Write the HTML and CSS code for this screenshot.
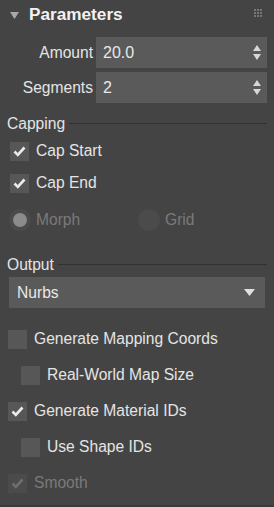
FILE: index.html
```html
<!DOCTYPE html>
<html lang="en">
<head>
  <meta charset="UTF-8">
  <meta name="viewport" content="width=device-width, initial-scale=1.0">
  <title>Parameters</title>
  <link rel="stylesheet" href="styles.css">
</head>
<body>
  <div class="panel">
    <!-- Rollout header -->
    <div class="header">
      <svg class="caret" width="9" height="7" viewBox="0 0 9 7"><path d="M0 0 H9 L4.5 7 Z" fill="#a8a8a8"/></svg>
      <span class="title">Parameters</span>
      <svg class="grip" width="8" height="8" viewBox="0 0 8 8" fill="#767676">
        <rect x="0" y="0" width="2" height="2"/><rect x="3" y="0" width="2" height="2"/><rect x="6" y="0" width="2" height="2"/>
        <rect x="0" y="3" width="2" height="2"/><rect x="3" y="3" width="2" height="2"/><rect x="6" y="3" width="2" height="2"/>
        <rect x="0" y="6" width="2" height="2"/><rect x="3" y="6" width="2" height="2"/><rect x="6" y="6" width="2" height="2"/>
      </svg>
    </div>

    <!-- Spinners -->
    <div class="spinners">
      <div class="spin-row">
        <span class="spin-label">Amount</span>
        <div class="field">
          <span>20.0</span>
          <svg class="arrows" width="8" height="15" viewBox="0 0 8 15" fill="#d8d8d8"><path d="M4 0 L8 6 H0 Z"/><path d="M0 9 H8 L4 15 Z"/></svg>
        </div>
      </div>
      <div class="spin-row">
        <span class="spin-label">Segments</span>
        <div class="field">
          <span>2</span>
          <svg class="arrows" width="8" height="15" viewBox="0 0 8 15" fill="#d8d8d8"><path d="M4 0 L8 6 H0 Z"/><path d="M0 9 H8 L4 15 Z"/></svg>
        </div>
      </div>
    </div>

    <!-- Capping group -->
    <div class="group-title"><span>Capping</span><div class="rule"></div></div>
    <div class="check-row cap">
      <span class="box"><svg class="tick" width="19" height="19" viewBox="0 0 19 19"><path d="M4.5 9.5 L7.8 12.8 L14.5 5.5"/></svg></span>
      <span>Cap Start</span>
    </div>
    <div class="check-row cap">
      <span class="box"><svg class="tick" width="19" height="19" viewBox="0 0 19 19"><path d="M4.5 9.5 L7.8 12.8 L14.5 5.5"/></svg></span>
      <span>Cap End</span>
    </div>
    <div class="radio-row">
      <div class="radio-item">
        <span class="radio on"></span>
        <span>Morph</span>
      </div>
      <div class="radio-item">
        <span class="radio"></span>
        <span>Grid</span>
      </div>
    </div>

    <!-- Output group -->
    <div class="group-title output"><span>Output</span><div class="rule"></div></div>
    <div class="dropdown">
      <span>Nurbs</span>
      <svg width="11" height="7" viewBox="0 0 11 7"><path d="M0 0 H11 L5.5 7 Z" fill="#e0e0e0"/></svg>
    </div>

    <div class="options">
      <div class="check-row">
        <span class="box"></span>
        <span>Generate Mapping Coords</span>
      </div>
      <div class="check-row indent">
        <span class="box"></span>
        <span>Real-World Map Size</span>
      </div>
      <div class="check-row">
        <span class="box"><svg class="tick" width="19" height="19" viewBox="0 0 19 19"><path d="M4.5 9.5 L7.8 12.8 L14.5 5.5"/></svg></span>
        <span>Generate Material IDs</span>
      </div>
      <div class="check-row indent">
        <span class="box"></span>
        <span>Use Shape IDs</span>
      </div>
      <div class="check-row disabled">
        <span class="box"><svg class="tick" width="19" height="19" viewBox="0 0 19 19"><path d="M4.5 9.5 L7.8 12.8 L14.5 5.5"/></svg></span>
        <span>Smooth</span>
      </div>
    </div>
  </div>
</body>
</html>
```

FILE: styles.css
```css
body {
  margin: 0;
  background-color: #3a3a3a;
  font-family: "Liberation Sans", Arial, sans-serif;
  font-size: 15.6px;
  color: #e4e4e4;
}
/* Rollout */
.panel {
  height: 505px;
  background-color: #444444;
  overflow: hidden;
}
.header {
  height: 29px;
  display: flex;
  align-items: center;
  padding-left: 10px;
  padding-right: 12px;
}
.caret {
  margin-top: 1px;
}
.title {
  margin-left: 10px;
  font-weight: bold;
  font-size: 17.2px;
  color: #f2f2f2;
  flex: 1;
}
.grip {
  margin-top: -3px;
}
/* Spinner rows */
.spinners {
  margin-top: 8px;
  display: flex;
  flex-direction: column;
  gap: 4px;
}
.spin-row {
  display: flex;
  align-items: center;
  height: 31px;
}
.spin-label {
  width: 93px;
  text-align: right;
}
.field {
  margin-left: 3px;
  width: 171px;
  height: 31px;
  background-color: #5a5a5a;
  display: flex;
  align-items: center;
  justify-content: space-between;
  padding-left: 7px;
  padding-right: 6px;
  box-sizing: border-box;
  color: #e8e8e8;
  font-size: 16px;
}
/* Group titles with the line */
.group-title {
  margin-top: 10px;
  height: 22px;
  display: flex;
  align-items: center;
  padding-left: 7px;
  padding-right: 7px;
}
.group-title .rule {
  flex: 1;
  height: 1px;
  background-color: #323232;
  margin-left: 4px;
  margin-top: -2px;
}
.group-title.output {
  margin-top: 13px;
}
/* Checkboxes */
.check-row {
  display: flex;
  align-items: center;
  height: 36px;
  padding-left: 8px;
}
.check-row.cap {
  height: 32px;
  padding-left: 10px;
}
.check-row.indent {
  padding-left: 21px;
}
.box {
  width: 19px;
  height: 19px;
  background-color: #575757;
  margin-right: 7px;
  display: flex;
}
.tick path {
  fill: none;
  stroke: #ececec;
  stroke-width: 2.6;
  stroke-linejoin: miter;
}
.check-row.disabled {
  color: #7a7a7a;
}
.check-row.disabled .box {
  background-color: #4b4b4b;
}
.check-row.disabled .tick path {
  stroke: #6e6e6e;
}
/* Radios */
.radio-row {
  height: 42px;
  display: flex;
  align-items: center;
  padding-left: 9px;
  color: #7a7a7a;
}
.radio-item {
  display: flex;
  align-items: center;
  width: 129px;
}
.radio {
  width: 22px;
  height: 22px;
  border-radius: 50%;
  background-color: #4b4b4b;
  margin-right: 5px;
  display: flex;
  align-items: center;
  justify-content: center;
}
.radio.on::after {
  content: "";
  width: 14px;
  height: 14px;
  border-radius: 50%;
  background-color: #8c8c8c;
}
/* Dropdown */
.dropdown {
  margin: 1px 9px 0 9px;
  height: 31px;
  background-color: #5a5a5a;
  display: flex;
  align-items: center;
  justify-content: space-between;
  padding-left: 8px;
  padding-right: 10px;
  color: #e8e8e8;
}
.options {
  margin-top: 13px;
}
```
